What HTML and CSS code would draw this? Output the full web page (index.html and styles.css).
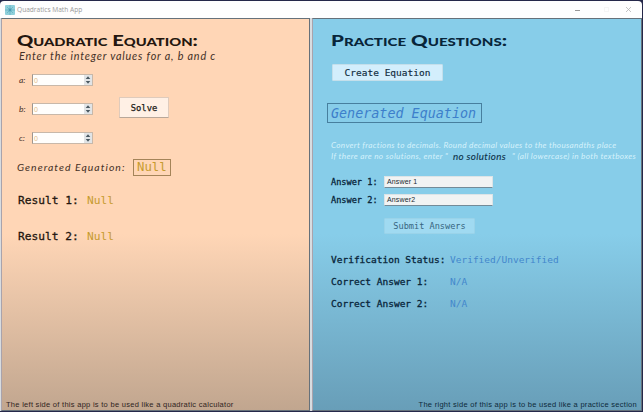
FILE: index.html
```html
<!DOCTYPE html>
<html lang="en">
<head>
<meta charset="utf-8">
<title>Quadratics Math App</title>
<link rel="stylesheet" href="styles.css">
</head>
<body>
<div class="window">
  <header class="titlebar">
    <svg class="app-icon" width="10" height="10" viewBox="0 0 10 10"><rect width="10" height="10" rx="1" fill="#8fd0db"/><path d="M5 0v10M0 5h10M2 2l6 6M8 2L2 8" stroke="#5fadc0" stroke-width=".7"/><circle cx="5" cy="5" r="1.4" fill="#4a9db5"/></svg>
    <span class="title">Quadratics Math App</span>
    <svg class="controls" width="62" height="10" viewBox="0 0 62 10" fill="none"><path d="M1 5.5h5" stroke="#999"/><rect x="30.5" y="2.5" width="4" height="4" stroke="#f5f5f5"/><path d="M52 2l5 5M57 2l-5 5" stroke="#b5b5b5" stroke-width=".8"/></svg>
  </header>
  <main class="panels">
    <section class="panel left">
      <h1 class="heading heading-left">Quadratic Equation:</h1>
      <p class="script intro">Enter the integer values for a, b and c</p>
      <div class="entry">
        <div class="fields">
          <div class="field"><span class="script var">a:</span><span class="spin"><i>0</i><svg width="8" height="10" viewBox="0 0 8 10"><path d="M4 1.3L6.3 4H1.7zM4 8.7L1.7 6h4.6z"/></svg></span></div>
          <div class="field"><span class="script var">b:</span><span class="spin"><i>0</i><svg width="8" height="10" viewBox="0 0 8 10"><path d="M4 1.3L6.3 4H1.7zM4 8.7L1.7 6h4.6z"/></svg></span></div>
          <div class="field"><span class="script var">c:</span><span class="spin"><i>0</i><svg width="8" height="10" viewBox="0 0 8 10"><path d="M4 1.3L6.3 4H1.7zM4 8.7L1.7 6h4.6z"/></svg></span></div>
        </div>
        <button class="button solve">Solve</button>
      </div>
      <div class="generated"><span class="script generated-label">Generated Equation:</span><span class="null-box">Null</span></div>
      <div class="result"><span class="strong">Result 1:</span><span class="gold">Null</span></div>
      <div class="result"><span class="strong">Result 2:</span><span class="gold">Null</span></div>
      <footer class="note">The left side of this app is to be used like a quadratic calculator</footer>
    </section>
    <section class="panel right">
      <h1 class="heading heading-right">Practice Questions:</h1>
      <button class="button create">Create Equation</button>
      <div class="equation-box">Generated Equation</div>
      <div class="hint">
        <p class="hint-one">Convert fractions to decimals. Round decimal values to the thousandths place</p>
        <p class="hint-row"><span class="hint-start">If there are no solutions, enter "</span><em>no solutions</em><span class="hint-end">" (all lowercase) in both textboxes</span></p>
      </div>
      <div class="answer"><label class="strong">Answer 1:</label><span class="textbox">Answer 1</span></div>
      <div class="answer"><label class="strong">Answer 2:</label><span class="textbox">Answer2</span></div>
      <button class="button submit">Submit Answers</button>
      <div class="status"><span class="strong">Verification Status:</span><span class="blue">Verified/Unverified</span></div>
      <div class="status"><span class="strong">Correct Answer 1:</span><span class="blue">N/A</span></div>
      <div class="status"><span class="strong">Correct Answer 2:</span><span class="blue">N/A</span></div>
      <footer class="note note-right">The right side of this app is to be used like a practice section</footer>
    </section>
  </main>
</div>
</body>
</html>
```
FILE: styles.css
```css
* { box-sizing: border-box; }
body { margin: 0; background: #25284a; overflow: hidden; font-family: "Liberation Sans", Arial, sans-serif; }
h1, p { margin: 0; font-weight: normal; }
span, p, h1, button, footer, .equation-box { white-space: nowrap; }
.window { width: 643px; height: 412px; padding: 1px 1px 1px 0; display: flex; flex-direction: column; }
.titlebar { height: 17px; background: #fefefe; border-radius: 4px 4px 0 0; display: flex; align-items: center; padding: 0 6px 0 5px; }
.title { margin-left: 2px; font: 6.6px "Open Sans", sans-serif; color: #999; }
.controls { margin-left: auto; }
.panels { flex: 1; min-height: 0; display: grid; grid-template-columns: 309px 330px; gap: 2px; padding-left: 1px; background: #d8dce0; }
.panel { display: flex; flex-direction: column; align-items: flex-start; border: 1px solid #66717a; border-left-color: #a9a3ac; min-width: 0; }
.left { background: linear-gradient(#ffd6b6 0, #ffd6b6 55%, #c1a68f 100%); color: #24160f; padding-left: 15px; }
.right { background: linear-gradient(#87cde9 0, #87cde9 55%, #689eb8 100%); color: #08253a; padding-left: 18px; }
.heading { height: 16px; line-height: 16px; font-family: Lato, sans-serif; font-weight: 900; font-size: 15px; font-variant: small-caps; transform-origin: left; }
.heading-left { margin-top: 13px; transform: scaleX(1.34); }
.heading-right { margin-top: 13px; transform: scaleX(1.37); }
.script { font-family: Lato, sans-serif; font-style: italic; color: #443026; }
.intro { margin-left: 2px; height: 15px; line-height: 15px; font-size: 10.8px; letter-spacing: .82px; }
.entry { display: flex; align-items: center; margin-top: 11px; }
.fields { display: flex; flex-direction: column; gap: 17px; }
.field { display: flex; align-items: center; height: 12px; padding-left: 2px; }
.var { width: 13px; font-size: 8.5px; }
.spin { width: 61px; height: 12px; background: #fffefc; border: 1px solid #c8b8a9; border-left-color: #9f968e; display: flex; align-items: center; justify-content: space-between; }
.spin i { font: 7px "Liberation Sans", sans-serif; color: #e3bd86; padding-left: 1px; }
.spin svg { fill: #4b5962; background: #e1e4e6; }
.button { font-family: "DejaVu Sans Mono", monospace; padding: 0; border: 1px solid #c4dfeb; border-radius: 1px; background: #d3eefc; color: #102b3c; text-align: center; }
.solve { margin: -3px 0 0 26px; width: 50px; height: 21px; font-size: 8.8px; background: #fff0e5; border-color: #dfcbbc; border-bottom-color: #b8a799; color: #211b18; -webkit-text-stroke: .25px; }
.generated { display: flex; align-items: center; margin-top: 14px; height: 18px; }
.generated-label { width: 116px; font-size: 10.4px; letter-spacing: 1.05px; }
.null-box { width: 38px; height: 17px; border: 1px solid #a48459; font: 12.3px/15px "DejaVu Sans Mono", monospace; color: #c69b2f; padding-left: 3px; }
.result { display: flex; height: 14px; margin-top: 18px; margin-left: 1px; font: 11.2px/14px "DejaVu Sans Mono", monospace; }
.result + .result { margin-top: 22px; }
.result .strong { width: 69px; }
.strong { -webkit-text-stroke: .3px; }
.gold { color: #c69b2f; }
.note { margin: auto 0 1px -11px; font-size: 7.5px; letter-spacing: .28px; line-height: 9px; color: #30241e; }
.note-right { margin-left: 0; align-self: flex-end; margin-right: 4px; color: #0d2a3b; }
.create { margin: 16px 0 0 1px; width: 111px; height: 17px; font-size: 9.5px; -webkit-text-stroke: .15px; }
.equation-box { margin: 22px 0 0 -4px; width: 155px; height: 20px; border: 1px solid #477f9e; font: italic 13.4px/20px "DejaVu Sans Mono", monospace; color: #3d7fcb; padding-left: 3px; }
.hint { margin-top: 17px; font: italic 8.2px/11px Lato, sans-serif; color: #d5f2fc; height: 23px; }
.hint-one { letter-spacing: .31px; }
.hint-row { display: flex; align-items: center; letter-spacing: .34px; }
.hint-row em { width: 59px; font-size: 9.8px; color: #0b3047; -webkit-text-stroke: .1px; }
.hint-start { width: 122px; }
.answer { display: flex; align-items: center; height: 13px; margin-top: 12px; font: 8.6px "DejaVu Sans Mono", monospace; }
.answer + .answer { margin-top: 5px; }
.answer label { width: 53px; }
.textbox { width: 109px; height: 12px; background: #f1f3f3; border: 1px solid #dce4e7; border-bottom-color: #738b98; font: 7px/10px "Liberation Sans", sans-serif; color: #202b31; padding-left: 2px; letter-spacing: .15px; }
.submit { margin: 12px 0 0 53px; width: 91px; height: 16px; font-size: 8.6px; background: #a0daf1; border-color: #9ad3e9; color: #376580; }
.status { display: flex; height: 12px; margin-top: 10px; font: 9.5px/12px "DejaVu Sans Mono", monospace; }
.submit + .status { margin-top: 20px; }
.status .strong { width: 119px; }
.blue { color: #4387cc; }
```
